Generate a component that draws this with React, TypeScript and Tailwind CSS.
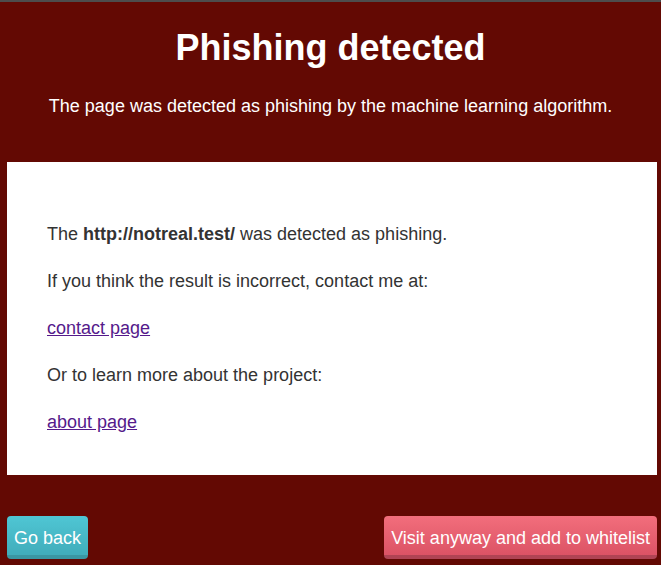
export default function App() {
  return (
    <div className="min-h-[565px] bg-[#630903] font-['Liberation_Sans',Arial,sans-serif]">
      <div className="h-[2px] bg-[#4d4d4d]" />
      <div className="flex flex-col items-center text-white">
        <h1 className="mt-[25px] text-[36px] leading-[41px] font-bold">Phishing detected</h1>
        <p className="mt-[28px] text-[18px] leading-[21px]">
          The page was detected as phishing by the machine learning algorithm.
        </p>
      </div>
      <div className="mt-[45px] ml-[7px] mr-[4px] h-[313px] bg-white px-[40px] pt-[59px] text-[18px] leading-[26px] text-[#333333]">
        <div className="flex flex-col gap-[21px]">
          <p>
            The <b>http://notreal.test/</b> was detected as phishing.
          </p>
          <p>If you think the result is incorrect, contact me at:</p>
          <p>
            <a href="#" className="text-[#551a8b] underline">contact page</a>
          </p>
          <p>Or to learn more about the project:</p>
          <p>
            <a href="#" className="text-[#551a8b] underline">about page</a>
          </p>
        </div>
      </div>
      <div className="mt-[41px] ml-[7px] mr-[4px] flex justify-between">
        <button className="h-[43px] rounded-[4px] border-b-[4px] border-[#3a97a3] bg-gradient-to-b from-[#4fc6d4] to-[#41adbb] px-[7px] pt-[5px] text-[18px] leading-[21px] text-white">
          Go back
        </button>
        <button className="h-[43px] rounded-[4px] border-b-[4px] border-[#b04454] bg-gradient-to-b from-[#f26e7c] to-[#dc5365] px-[7px] pt-[5px] text-[18px] leading-[21px] text-white">
          Visit anyway and add to whitelist
        </button>
      </div>
    </div>
  );
}
